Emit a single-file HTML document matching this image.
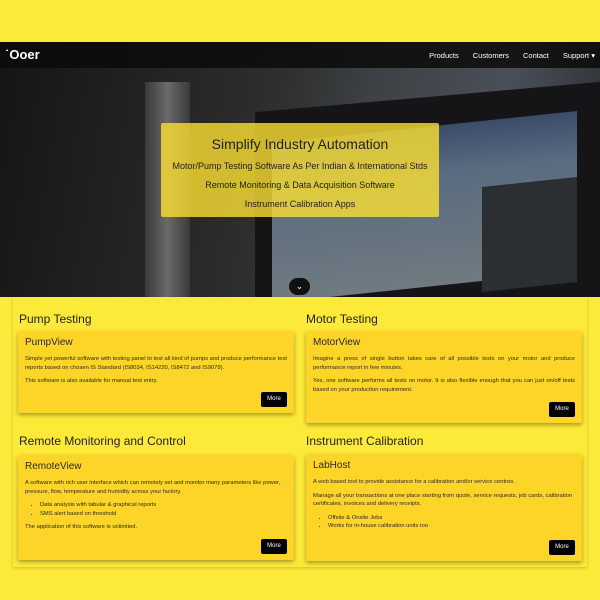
<!DOCTYPE html>
<html><head><style>
*{margin:0;padding:0;box-sizing:border-box}
body{width:600px;height:600px;background:#fdea3b;font-family:"Liberation Sans",sans-serif;position:relative;overflow:hidden}
.hero{position:absolute;left:0;top:42px;width:600px;height:255px;background:linear-gradient(100deg,#151515 0%,#262624 30%,#2e302e 45%,#3e4246 60%,#4a5058 80%,#2a2c30 100%);overflow:hidden}
.mon{position:absolute;left:255px;top:55px;width:345px;height:215px;background:#151517;transform:skewY(-5deg)}
.scr{position:absolute;left:272px;top:85px;width:305px;height:160px;background:linear-gradient(180deg,#3a4c6a,#5a6c80 30%,#707a80 100%);transform:skewY(-6deg)}
.panel{position:absolute;left:482px;top:140px;width:95px;height:105px;background:#2b2f32;transform:skewY(-6deg)}
.cyl{position:absolute;left:145px;top:40px;width:45px;height:215px;background:linear-gradient(90deg,#3a3a3a,#6a6a6a,#3a3a3a)}
nav{position:absolute;left:0;top:42px;width:600px;height:26px;background:rgba(10,10,10,.85);color:#fff}
.logo{position:absolute;left:5px;top:5px;font-weight:bold;font-size:13px}
.links{position:absolute;right:5px;top:9px;font-size:7.5px}
.links span{margin-left:14px}
.box{position:absolute;left:161px;top:123px;width:278px;height:94px;background:rgba(253,224,50,.8);text-align:center;color:#222;border-radius:2px}
.box h1{font-size:14px;font-weight:normal;margin-top:13px}
.box p{font-size:9px;margin-top:9px}
.down{position:absolute;left:289px;top:278px;width:21px;height:17px;border-radius:10px;background:#111;color:#fff;font-size:9px;text-align:center;line-height:16px}
.wrap{position:absolute;left:13px;top:297px;width:574px;height:270px;background:#fde938;box-shadow:0 1px 3px rgba(0,0,0,.2)}
h2{position:absolute;font-size:12px;font-weight:normal;color:#222}
.card{position:absolute;width:276px;background:#fdd528;box-shadow:0 2px 4px rgba(0,0,0,.35);border-radius:2px;padding:6px 7px;color:#2a2a2a}
.card h3{font-size:10px;font-weight:normal;margin-bottom:7px}
.card p{font-size:5.8px;line-height:8.5px;margin-bottom:5px}
.card ul{font-size:5.8px;line-height:8.5px;margin:0 0 5px 15px}
.more{position:absolute;right:7px;bottom:6px;width:26px;height:15px;background:#000;color:#fff;font-size:6px;text-align:center;line-height:15px;border-radius:2px}
</style></head><body>
<div class="hero"><div class="cyl"></div><div class="mon"></div><div class="scr"></div><div class="panel"></div></div>
<nav><div class="logo">&#729;Ooer</div><div class="links"><span>Products</span><span>Customers</span><span>Contact</span><span>Support &#9662;</span></div></nav>
<div class="box"><h1>Simplify Industry Automation</h1><p>Motor/Pump Testing Software As Per Indian &amp; International Stds</p><p>Remote Monitoring &amp; Data Acquisition Software</p><p>Instrument Calibration Apps</p></div>
<div class="down">&#8964;</div>
<div class="wrap"></div>
<h2 style="left:19px;top:312px">Pump Testing</h2>
<h2 style="left:306px;top:312px">Motor Testing</h2>
<h2 style="left:19px;top:434px">Remote Monitoring and Control</h2>
<h2 style="left:306px;top:434px">Instrument Calibration</h2>
<div class="card" style="left:18px;top:331px;height:82px"><h3>PumpView</h3><p>Simple yet powerful software with testing panel to test all kind of pumps and produce performance test reports based on chosen IS Standard (IS8034, IS14220, IS8472 and IS9079).</p><p>This software is also available for manual test entry.</p><div class="more">More</div></div>
<div class="card" style="left:306px;top:331px;height:92px"><h3>MotorView</h3><p style="text-align:justify">Imagine a press of single button takes care of all possible tests on your motor and produce performance report in few minutes.</p><p style="text-align:justify">Yes, one software performs all tests on motor. It is also flexible enough that you can just on/off tests based on your production requirement.</p><div class="more">More</div></div>
<div class="card" style="left:18px;top:455px;height:105px"><h3>RemoteView</h3><p>A software with rich user interface which can remotely set and monitor many parameters like power, pressure, flow, temperature and humidity across your factory.</p><ul><li>Data analysis with tabular &amp; graphical reports</li><li>SMS alert based on threshold</li></ul><p>The application of this software is unlimited.</p><div class="more">More</div></div>
<div class="card" style="left:306px;top:454px;height:107px"><h3>LabHost</h3><p>A web based tool to provide assistance for a calibration and/or service centres.</p><p>Manage all your transactions at one place starting from quote, service requests, job cards, calibration certificates, invoices and delivery receipts.</p><ul><li>Offsite &amp; Onsite Jobs</li><li>Works for in-house calibration units too</li></ul><div class="more">More</div></div>
</body></html>
